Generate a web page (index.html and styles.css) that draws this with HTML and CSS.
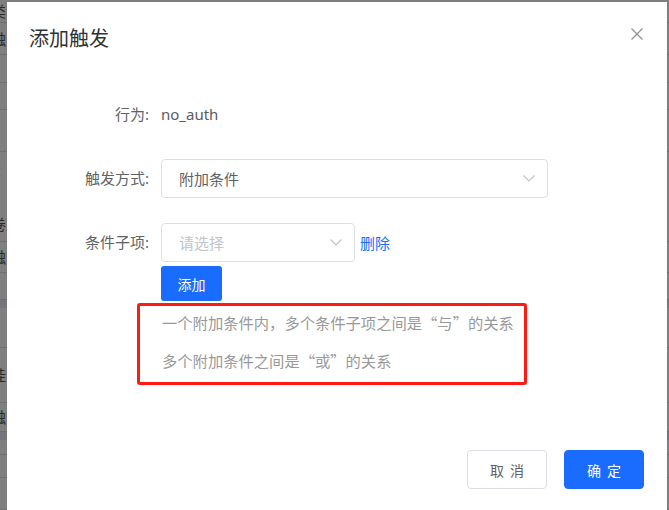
FILE: index.html
```html
<!DOCTYPE html>
<html lang="zh-CN">
<head>
<meta charset="utf-8">
<title>添加触发</title>
<link rel="stylesheet" href="styles.css">
</head>
<body>
<div class="page">
  <div class="bg">
    <div class="bg-row h23"><span class="bg-text">类</span></div>
    <div class="bg-row h32"><span class="bg-text">触</span></div>
    <div class="bg-row h28"></div>
    <div class="bg-row h27"></div>
    <div class="bg-row h42"></div>
    <div class="bg-row h90 bg-stack"><span class="bg-text">R</span><span class="bg-text">卷</span></div>
    <div class="bg-row h31"><span class="bg-text">触</span></div>
    <div class="bg-row h27"></div>
    <div class="bg-band"></div>
    <div class="bg-row h40"></div>
    <div class="bg-row h55"><span class="bg-text">挂</span></div>
    <div class="bg-row h29"><span class="bg-text">触</span></div>
    <div class="bg-band"></div>
    <div class="bg-row h15"></div>
    <div class="bg-row h23"></div>
    <div class="bg-row h32"></div>
  </div>
  <div class="mask"></div>

  <div class="dialog">
    <div class="dlg-header">
      <span class="dlg-title">添加触发</span>
      <span class="dlg-close">
        <svg width="12" height="12" viewBox="0 0 12 12"><path d="M0.5 0.5 L11.5 11.5 M11.5 0.5 L0.5 11.5" stroke="#909399" stroke-width="1.3" fill="none"/></svg>
      </span>
    </div>

    <div class="dlg-body">
      <div class="form-item">
        <label class="form-label">行为:</label>
        <div class="form-content"><span class="value">no_auth</span></div>
      </div>

      <div class="form-item">
        <label class="form-label">触发方式:</label>
        <div class="form-content">
          <div class="select select-wide">
            <span class="select-text">附加条件</span>
            <svg class="chevron" width="12" height="7" viewBox="0 0 12 7"><path d="M0.5 0.5 L6 6 L11.5 0.5" stroke="#c0c4cc" stroke-width="1.2" fill="none"/></svg>
          </div>
        </div>
      </div>

      <div class="form-item form-item-tight">
        <label class="form-label">条件子项:</label>
        <div class="form-content">
          <div class="select select-narrow">
            <span class="select-text placeholder">请选择</span>
            <svg class="chevron" width="12" height="7" viewBox="0 0 12 7"><path d="M0.5 0.5 L6 6 L11.5 0.5" stroke="#c0c4cc" stroke-width="1.2" fill="none"/></svg>
          </div>
          <a class="link">删除</a>
        </div>
      </div>

      <div class="add-row">
        <button class="btn-add">添加</button>
        <div class="hint">
          <p class="hint-line hint-first">一个附加条件内，多个条件子项之间是“与”的关系</p>
          <p class="hint-line hint-second">多个附加条件之间是“或”的关系</p>
        </div>
      </div>
    </div>

    <div class="dlg-footer">
      <button class="btn btn-default">取 消</button>
      <button class="btn btn-primary">确 定</button>
    </div>
  </div>
</div>
</body>
</html>
```

FILE: styles.css
```css
* { box-sizing: border-box; }

html, body {
  margin: 0;
  padding: 0;
  width: 669px;
  height: 510px;
  overflow: hidden;
  font-family: "Noto Sans", "Noto Sans CJK SC", sans-serif;
}

.page {
  position: relative;
  width: 669px;
  height: 510px;
  overflow: hidden;
  background: #ffffff;
}

/* background page (dimmed) */
.bg {
  display: flex;
  flex-direction: column;
  width: 100%;
}
.bg-row {
  display: flex;
  align-items: center;
  border-bottom: 1px solid #dcdcdc;
  flex-shrink: 0;
}
.bg-stack {
  flex-direction: column;
  align-items: flex-start;
  justify-content: flex-start;
  padding-top: 8px;
  gap: 34px;
}
.bg-text {
  margin-left: -9px;
  font-size: 15px;
  line-height: 20px;
  color: #555;
  font-family: "Noto Sans CJK SC", sans-serif;
}
.bg-band {
  height: 8px;
  background: #e8edf6;
  flex-shrink: 0;
}
.h15 { height: 15px; }
.h23 { height: 23px; }
.h27 { height: 27px; }
.h28 { height: 28px; }
.h29 { height: 29px; }
.h31 { height: 31px; }
.h32 { height: 32px; }
.h40 { height: 40px; }
.h42 { height: 42px; }
.h55 { height: 55px; }
.h90 { height: 90px; }

.mask {
  position: absolute;
  inset: 0;
  background: rgba(0, 0, 0, 0.5);
}

/* dialog */
.dialog {
  position: absolute;
  left: 7px;
  top: 2px;
  width: 660px;
  height: 520px;
  background: #ffffff;
  display: flex;
  flex-direction: column;
}

.dlg-header {
  position: relative;
  padding: 22px 22px 0 22px;
  height: 50px;
}
.dlg-title {
  font-family: "Noto Sans CJK SC", sans-serif;
  font-size: 20px;
  line-height: 28px;
  color: #303133;
  display: block;
}
.dlg-close {
  position: absolute;
  right: 24px;
  top: 26px;
  width: 12px;
  height: 12px;
  display: flex;
}

.dlg-body {
  padding: 43px 0 0 18px;
  display: flex;
  flex-direction: column;
}

.form-item {
  display: flex;
  align-items: center;
  height: 39px;
  margin-bottom: 25px;
}
.form-item-tight {
  margin-bottom: 4px;
}
.form-label {
  width: 136px;
  padding-right: 12px;
  text-align: right;
  font-size: 15px;
  line-height: 39px;
  color: #606266;
  flex-shrink: 0;
}
.form-content {
  display: flex;
  align-items: center;
  height: 39px;
}
.value {
  font-size: 15px;
  color: #5a5c60;
  line-height: 39px;
}

.select {
  height: 39px;
  border: 1px solid #dcdfe6;
  border-radius: 4px;
  display: flex;
  align-items: center;
  justify-content: space-between;
  padding: 0 12px 0 17px;
  background: #fff;
}
.select-wide { width: 387px; }
.select-narrow { width: 194px; }
.select-text {
  font-size: 15px;
  color: #606266;
  font-family: "Noto Sans CJK SC", sans-serif;
}
.placeholder { color: #c0c4cc; }
.chevron { display: block; }

.link {
  margin-left: 5px;
  font-size: 15px;
  color: #1a6cff;
  font-family: "Noto Sans CJK SC", sans-serif;
  cursor: pointer;
}

.add-row {
  display: flex;
  flex-direction: column;
  align-items: flex-start;
  padding-left: 136px;
}
.btn-add {
  width: 61px;
  height: 35px;
  border: none;
  border-radius: 3px;
  background: #1a6cff;
  color: #ffffff;
  font-family: "Noto Sans CJK SC", sans-serif;
  font-size: 14px;
  padding: 0;
}

.hint {
  margin-top: 2px;
  margin-left: -24px;
  width: 390px;
  border: 3px solid #ff1a14;
  border-radius: 3px;
  padding: 0 0 0 22px;
}
.hint-line {
  margin: 0;
  font-family: "Noto Sans CJK SC", sans-serif;
  font-size: 15.3px;
  color: #999999;
  white-space: nowrap;
}
.hint-first { line-height: 32px; }
.hint-second { line-height: 44px; }

.dlg-footer {
  display: flex;
  justify-content: flex-end;
  gap: 17px;
  padding: 65px 23px 0 0;
}
.btn {
  width: 80px;
  height: 39px;
  border-radius: 4px;
  font-family: "Noto Sans CJK SC", sans-serif;
  font-size: 14px;
  word-spacing: 3px;
  padding: 0;
}
.btn-default {
  background: #ffffff;
  border: 1px solid #dcdfe6;
  color: #606266;
}
.btn-primary {
  background: #1a6cff;
  border: 1px solid #1a6cff;
  color: #ffffff;
}
```
